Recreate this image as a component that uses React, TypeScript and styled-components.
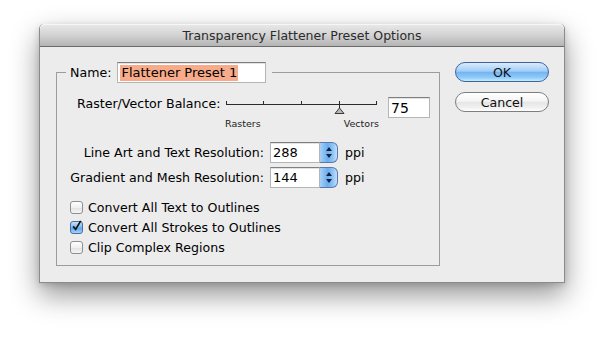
import React from "react";
import styled, { createGlobalStyle } from "styled-components";

const GlobalStyle = createGlobalStyle`
  html, body {
    margin: 0;
    background: #ffffff;
  }
  body {
    font-family: "DejaVu Sans", "Liberation Sans", sans-serif;
    font-size: 12.6px;
    color: #000;
  }
`;

const Page = styled.div`
  padding: 24px 0 0 39px;
  width: 605px;
  height: 337px;
  box-sizing: border-box;
`;

const Window = styled.div`
  width: 526px;
  box-sizing: border-box;
  background: #ececec;
  border: 1px solid #8b8b8b;
  border-top: none;
  border-radius: 5px 5px 0 0;
  box-shadow: 0 12px 28px rgba(0, 0, 0, 0.42), 0 2px 6px rgba(0, 0, 0, 0.15);
`;

const TitleBar = styled.div`
  height: 22px;
  border-bottom: 1px solid #6a6a6a;
  border-radius: 5px 5px 0 0;
  background: linear-gradient(#e9e9e9, #d3d3d3 50%, #b4b4b4);
  display: flex;
  align-items: center;
  justify-content: center;
  font-size: 12.5px;
  color: #2b2b2b;
  box-shadow: inset 0 1px 0 #f6f6f6;
`;

const Body = styled.div`
  display: flex;
  align-items: flex-start;
  padding: 15px 0 16px 16px;
`;

const Group = styled.fieldset`
  margin: 0;
  width: 384px;
  box-sizing: border-box;
  border: 1px solid #9c9c9c;
  padding: 14px 0 8px 13px;
  min-width: 0;
`;

const Legend = styled.legend`
  margin-left: -4px;
  padding: 0 6px 0 4px;
  display: flex;
  align-items: center;
  gap: 6px;
`;

const TextField = styled.div<{ $width: number }>`
  width: ${({ $width }) => $width}px;
  height: 21px;
  box-sizing: border-box;
  background: #fff;
  border: 1px solid #b5b5b5;
  border-top-color: #7f7f7f;
  box-shadow: inset 0 1px 0 #e2e2e2;
  display: flex;
  align-items: center;
  padding-left: 2px;
  font-size: 13px;
`;

const Selection = styled.span`
  background: #f8ab8b;
  line-height: 16px;
  padding: 0 1px;
`;

const BalanceRow = styled.div`
  display: flex;
  align-items: flex-start;
  padding-left: 7px;
`;

const BalanceLabel = styled.div`
  width: 148px;
  line-height: 16px;
  margin-top: -1px;
`;

const SliderBlock = styled.div`
  width: 156px;
  display: flex;
  flex-direction: column;
`;

const RangeLabels = styled.div`
  display: flex;
  justify-content: space-between;
  font-size: 9.5px;
  line-height: 12px;
  color: #222;
  padding-right: 2px;
`;

const ValueField = styled(TextField)`
  margin-left: 7px;
  font-size: 14px;
`;

const ResolutionList = styled.div`
  display: flex;
  flex-direction: column;
  gap: 4px;
  margin-top: 12px;
`;

const ResolutionRow = styled.div`
  display: flex;
  align-items: center;
`;

const ResolutionLabel = styled.div`
  width: 194px;
  white-space: nowrap;
  margin-right: 6px;
  display: flex;
  justify-content: flex-end;
`;

const Stepper = styled.div`
  width: 18px;
  height: 21px;
  box-sizing: border-box;
  border: 1px solid #5a78a8;
  border-left: none;
  border-radius: 0 6px 6px 0;
  background: linear-gradient(90deg, #a9d0f5, #6aaef0 45%, #8cc4f6 75%, #c3e2fd);
  display: flex;
  align-items: center;
  justify-content: center;
`;

const Unit = styled.span`
  margin-left: 7px;
`;

const CheckList = styled.div`
  display: flex;
  flex-direction: column;
  margin-top: 9px;
`;

const CheckRow = styled.label`
  height: 20px;
  display: flex;
  align-items: center;
  gap: 5px;
`;

const Box = styled.span<{ $checked?: boolean }>`
  width: 13px;
  height: 13px;
  box-sizing: border-box;
  border: 1px solid ${({ $checked }) => ($checked ? "#4d6d9c" : "#8e8e8e")};
  border-radius: 3px;
  background: ${({ $checked }) =>
    $checked
      ? "linear-gradient(#c7e1fb, #78b6f1 50%, #5aa5ee 55%, #a7d4fb)"
      : "linear-gradient(#ffffff, #f0f0f0 50%, #e2e2e2 55%, #f6f6f6)"};
  display: flex;
  align-items: center;
  justify-content: center;
  overflow: visible;
`;

const Buttons = styled.div`
  margin-left: 15px;
  display: flex;
  flex-direction: column;
  gap: 10px;
`;

const Button = styled.button<{ $default?: boolean }>`
  width: 94px;
  height: 20px;
  box-sizing: border-box;
  border-radius: 10px;
  border: 1px solid ${({ $default }) => ($default ? "#3f639f" : "#7e7e7e")};
  background: ${({ $default }) =>
    $default
      ? "linear-gradient(#d9ecfd, #a3cdf6 45%, #74b5f1 52%, #8ecaf9 80%, #c5ecff)"
      : "linear-gradient(#ffffff, #f5f5f5 45%, #e6e6e6 52%, #f0f0f0 80%, #ffffff)"};
  font-family: inherit;
  font-size: 12.6px;
  color: #111;
  padding: 0;
  display: flex;
  align-items: center;
  justify-content: center;
`;

function Slider() {
  const ticks = [1, 38, 76, 114, 151];
  return (
    <svg width="156" height="21" viewBox="0 0 156 21">
      <line x1="1" y1="7.5" x2="151" y2="7.5" stroke="#2a2a2a" strokeWidth="1" />
      {ticks.map((x) => (
        <line key={x} x1={x + 0.5} y1="4" x2={x + 0.5} y2="8" stroke="#2a2a2a" strokeWidth="1" />
      ))}
      <line x1="114.5" y1="8" x2="114.5" y2="11" stroke="#2a2a2a" strokeWidth="1" />
      <path d="M114.5 11 L119 16.5 L110 16.5 Z" fill="#b8b8b8" stroke="#3a3a3a" strokeWidth="1" />
    </svg>
  );
}

function StepArrows() {
  return (
    <svg width="8" height="13" viewBox="0 0 8 13">
      <path d="M4 1 L7 5 L1 5 Z" fill="#15223a" />
      <path d="M4 12 L7 8 L1 8 Z" fill="#15223a" />
    </svg>
  );
}

function Check({ checked, label }: { checked?: boolean; label: string }) {
  return (
    <CheckRow>
      <Box $checked={checked}>
        {checked && (
          <svg width="13" height="14" viewBox="0 0 13 14" style={{ marginTop: -3 }}>
            <path d="M2.5 7.5 L5.5 11 L11.5 1" fill="none" stroke="#111" strokeWidth="2" />
          </svg>
        )}
      </Box>
      {label}
    </CheckRow>
  );
}

export default function App() {
  return (
    <Page>
      <GlobalStyle />
      <Window>
        <TitleBar>Transparency Flattener Preset Options</TitleBar>
        <Body>
          <Group>
            <Legend>
              <span>Name:</span>
              <TextField $width={149}>
                <Selection>Flattener Preset 1</Selection>
              </TextField>
            </Legend>
            <BalanceRow>
              <BalanceLabel>Raster/Vector Balance:</BalanceLabel>
              <SliderBlock>
                <Slider />
                <RangeLabels>
                  <span>Rasters</span>
                  <span>Vectors</span>
                </RangeLabels>
              </SliderBlock>
              <ValueField $width={42}>75</ValueField>
            </BalanceRow>
            <ResolutionList>
              <ResolutionRow>
                <ResolutionLabel>Line Art and Text Resolution:</ResolutionLabel>
                <TextField $width={50}>288</TextField>
                <Stepper>
                  <StepArrows />
                </Stepper>
                <Unit>ppi</Unit>
              </ResolutionRow>
              <ResolutionRow>
                <ResolutionLabel>Gradient and Mesh Resolution:</ResolutionLabel>
                <TextField $width={50}>144</TextField>
                <Stepper>
                  <StepArrows />
                </Stepper>
                <Unit>ppi</Unit>
              </ResolutionRow>
            </ResolutionList>
            <CheckList>
              <Check label="Convert All Text to Outlines" />
              <Check checked label="Convert All Strokes to Outlines" />
              <Check label="Clip Complex Regions" />
            </CheckList>
          </Group>
          <Buttons>
            <Button $default>OK</Button>
            <Button>Cancel</Button>
          </Buttons>
        </Body>
      </Window>
    </Page>
  );
}
